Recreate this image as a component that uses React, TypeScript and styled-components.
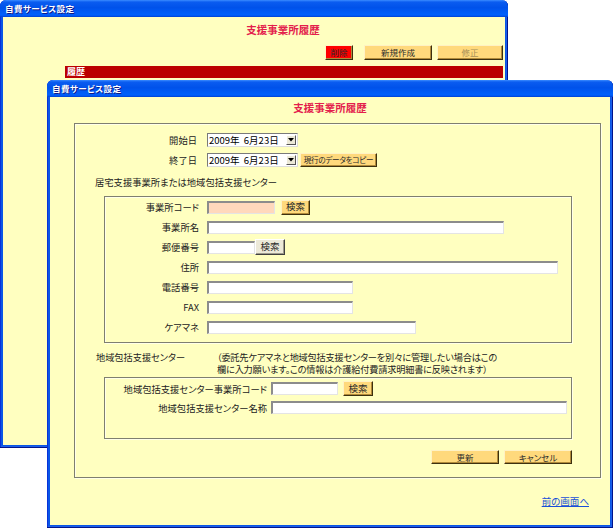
import React from 'react'
import styled, { createGlobalStyle } from 'styled-components'

const GlobalStyle = createGlobalStyle`
    html, body {
        margin: 0;
        padding: 0;
        background: #ffffff;
    }
    body {
        font-family: "Noto Sans CJK JP", "Noto Sans", sans-serif;
        font-feature-settings: "palt";
    }
`

const Desktop = styled.div`
    position: relative;
    width: 615px;
    height: 530px;
    overflow: hidden;
    background: #ffffff;
`

const Window = styled.div<{ $left: number; $top: number; $width: number; $height: number }>`
    position: absolute;
    left: ${({ $left }) => $left}px;
    top: ${({ $top }) => $top}px;
    width: ${({ $width }) => $width}px;
    height: ${({ $height }) => $height}px;
    box-sizing: border-box;
    display: flex;
    flex-direction: column;
    background: #0a56e6;
    border-radius: 6px 6px 0 0;
    box-shadow: inset -1px -1px #00138c, inset 1px 0 #0831d9, inset -2px -2px #1b5fe8;
    overflow: hidden;
`

const TitleBar = styled.div`
    flex: none;
    height: 17px;
    display: flex;
    align-items: center;
    padding-left: 5px;
    background: linear-gradient(
        to bottom,
        #3b8cff 0%,
        #0a5cf0 12%,
        #0052ea 45%,
        #0060fb 85%,
        #0058f2 92%,
        #003fd2 100%
    );
    border-radius: 6px 6px 0 0;
`

const TitleText = styled.span`
    color: #ffffff;
    font-size: 8.5px;
    font-weight: bold;
    letter-spacing: 0.4px;
    text-shadow: 1px 1px #0f1a89;
    line-height: 1;
`

const Client = styled.div`
    flex: 1;
    margin: 0 3px 3px 3px;
    background: #ffffc0;
    overflow: hidden;
    display: flex;
    flex-direction: column;
`

const PageTitle = styled.div<{ $top: number }>`
    margin-top: ${({ $top }) => $top}px;
    height: 16px;
    line-height: 16px;
    text-align: center;
    color: #e3204c;
    font-size: 10.5px;
    font-weight: bold;
    width: 560px;
`

const BackBody = styled.div`
    margin-left: 62px;
    width: 438px;
`

const ButtonRow = styled.div<{ $top?: number; $right?: number }>`
    display: flex;
    justify-content: flex-end;
    align-items: center;
    gap: 5px;
    margin-top: ${({ $top = 0 }) => $top}px;
    padding-right: ${({ $right = 0 }) => $right}px;
`

const Button = styled.button<{
    $w: number
    $h?: number
    $tone?: 'yellow' | 'red' | 'gray'
    $disabled?: boolean
    $size?: number
    $spacing?: number
}>`
    flex: none;
    display: flex;
    align-items: center;
    justify-content: center;
    width: ${({ $w }) => $w}px;
    height: ${({ $h = 15 }) => $h}px;
    padding: 0;
    margin: 0;
    box-sizing: border-box;
    font-family: inherit;
    font-feature-settings: "palt";
    font-size: ${({ $size = 8.5 }) => $size}px;
    letter-spacing: ${({ $spacing = 0 }) => $spacing}px;
    line-height: 1;
    white-space: nowrap;
    overflow: hidden;
    cursor: pointer;
    color: ${({ $disabled }) => ($disabled ? '#a89058' : '#2a2a2a')};
    background: ${({ $tone = 'yellow' }) =>
        $tone === 'red' ? '#ff0000' : $tone === 'gray' ? '#ece9d8' : '#ffd97c'};
    border: 1px solid;
    border-color: ${({ $tone = 'yellow' }) =>
        $tone === 'gray' ? '#ffffff #404040 #404040 #ffffff' : '#fff2c4 #3c3010 #3c3010 #fff2c4'};
    box-shadow: ${({ $tone = 'yellow' }) =>
        $tone === 'gray' ? 'inset -1px -1px #9d9a8c' : 'inset -1px -1px #b08a3a'};
`

const RedBar = styled.div`
    margin-top: 6px;
    height: 12px;
    line-height: 12px;
    background: #bb0000;
    color: #ffffff;
    font-size: 9px;
    font-weight: bold;
    padding-left: 2px;
`

const Fieldset = styled.div`
    margin: 7px 9px 0 24px;
    box-sizing: border-box;
    border: 1px solid #7f7f70;
    box-shadow: 1px 1px 0 #ffffe8, inset 1px 1px 0 #ffffe8;
    padding: 6px 0 13px 0;
`

const FieldRow = styled.div<{ $h?: number }>`
    display: flex;
    align-items: center;
    height: ${({ $h = 20 }) => $h}px;
`

const Label = styled.div<{ $w: number; $gap: number }>`
    flex: none;
    width: ${({ $w }) => $w}px;
    margin-right: ${({ $gap }) => $gap}px;
    text-align: right;
    font-size: 9.3px;
    color: #222222;
    white-space: nowrap;
`

const Input = styled.div<{ $w: number; $peach?: boolean }>`
    flex: none;
    width: ${({ $w }) => $w}px;
    height: 13px;
    box-sizing: border-box;
    background: ${({ $peach }) => ($peach ? '#ffd8bc' : '#ffffff')};
    border-top: 2px solid #8c8c8c;
    border-left: 2px solid #8c8c8c;
    border-right: 1px solid #e4e4e4;
    border-bottom: 1px solid #e4e4e4;
`

const Select = styled.div`
    flex: none;
    width: 91px;
    height: 14px;
    box-sizing: border-box;
    background: #ffffff;
    border-top: 1px solid #7a7a7a;
    border-left: 1px solid #7a7a7a;
    border-right: 1px solid #dcdcdc;
    border-bottom: 1px solid #dcdcdc;
    display: flex;
    align-items: center;
    justify-content: space-between;
    font-size: 9.5px;
    color: #000000;
    padding-left: 1px;
    white-space: pre;
`

const DropArrow = styled.span`
    flex: none;
    width: 10px;
    height: 10px;
    margin-right: 1px;
    box-sizing: border-box;
    background: #ece9d8;
    border: 1px solid;
    border-color: #ffffff #555555 #555555 #ffffff;
    display: flex;
    align-items: center;
    justify-content: center;
`

const SectionText = styled.div<{ $left: number; $top: number }>`
    margin: ${({ $top }) => $top}px 0 0 ${({ $left }) => $left}px;
    height: 20px;
    line-height: 20px;
    font-size: 9.3px;
    color: #222222;
`

const InnerBox = styled.div<{ $top: number; $pt: number; $pb: number }>`
    margin: ${({ $top }) => $top}px 0 0 29px;
    width: 468px;
    box-sizing: border-box;
    border: 1px solid #7f7f70;
    box-shadow: 1px 1px 0 #ffffe8, inset 1px 1px 0 #ffffe8;
    padding: ${({ $pt }) => $pt}px 0 ${({ $pb }) => $pb}px 0;
`

const NoteRow = styled.div`
    display: flex;
    margin: 8px 0 0 21px;
    font-size: 9.2px;
    color: #222222;
    line-height: 12px;
`

const NoteHeading = styled.div`
    flex: none;
    width: 121px;
`

const Note = styled.div`
    white-space: nowrap;
    letter-spacing: -0.2px;
`

const LinkRow = styled.div`
    display: flex;
    justify-content: flex-end;
    padding-right: 21px;
    margin-top: 17px;
`

const BackLink = styled.a`
    font-size: 9.5px;
    line-height: 12px;
    color: #1a4fd8;
    text-decoration: underline;
    cursor: pointer;
`

function DateSelect({ value }: { value: string }) {
    return (
        <Select>
            {value}
            <DropArrow>
                <svg width="6" height="4" viewBox="0 0 6 4">
                    <path d="M0 0H6L3 3.5Z" fill="#000" />
                </svg>
            </DropArrow>
        </Select>
    )
}

export default function App() {
    return (
        <Desktop>
            <GlobalStyle />

            <Window $left={0} $top={0} $width={508} $height={448}>
                <TitleBar>
                    <TitleText>自費サービス設定</TitleText>
                </TitleBar>
                <Client>
                    <PageTitle $top={5}>支援事業所履歴</PageTitle>
                    <BackBody>
                        <ButtonRow $top={7}>
                            <Button $w={28} $tone="red" style={{ marginRight: 6 }}>
                                削除
                            </Button>
                            <Button $w={68}>新規作成</Button>
                            <Button $w={66} $disabled>
                                修正
                            </Button>
                        </ButtonRow>
                        <RedBar>履歴</RedBar>
                    </BackBody>
                </Client>
            </Window>

            <Window $left={47} $top={80} $width={566} $height={448}>
                <TitleBar>
                    <TitleText>自費サービス設定</TitleText>
                </TitleBar>
                <Client>
                    <PageTitle $top={3}>支援事業所履歴</PageTitle>

                    <Fieldset>
                        <FieldRow>
                            <Label $w={122} $gap={10}>開始日</Label>
                            <DateSelect value="2009年  6月23日" />
                        </FieldRow>
                        <FieldRow>
                            <Label $w={122} $gap={10}>終了日</Label>
                            <DateSelect value="2009年  6月23日" />
                            <Button $w={77} $h={14} $size={7.6} $spacing={-0.3} style={{ marginLeft: 2 }}>
                                現行のデータをコピー
                            </Button>
                        </FieldRow>

                        <SectionText $left={20} $top={2}>
                            居宅支援事業所または地域包括支援センター
                        </SectionText>

                        <InnerBox $top={4} $pt={0} $pb={5}>
                            <FieldRow>
                                <Label $w={94} $gap={8}>事業所コード</Label>
                                <Input $w={68} $peach />
                                <Button $w={29} $size={9.5} style={{ marginLeft: 6 }}>
                                    検索
                                </Button>
                            </FieldRow>
                            <FieldRow>
                                <Label $w={94} $gap={8}>事業所名</Label>
                                <Input $w={297} />
                            </FieldRow>
                            <FieldRow>
                                <Label $w={94} $gap={8}>郵便番号</Label>
                                <Input $w={48} />
                                <Button $w={30} $h={16} $tone="gray" $size={9.5}>
                                    検索
                                </Button>
                            </FieldRow>
                            <FieldRow>
                                <Label $w={94} $gap={8}>住所</Label>
                                <Input $w={351} />
                            </FieldRow>
                            <FieldRow>
                                <Label $w={94} $gap={8}>電話番号</Label>
                                <Input $w={146} />
                            </FieldRow>
                            <FieldRow>
                                <Label $w={94} $gap={8}>FAX</Label>
                                <Input $w={146} />
                            </FieldRow>
                            <FieldRow>
                                <Label $w={94} $gap={8}>ケアマネ</Label>
                                <Input $w={209} />
                            </FieldRow>
                        </InnerBox>

                        <NoteRow>
                            <NoteHeading>地域包括支援センター</NoteHeading>
                            <Note>
                                （委託先ケアマネと地域包括支援センターを別々に管理したい場合はこの
                                <br />
                                欄に入力願います。この情報は介護給付費請求明細書に反映されます）
                            </Note>
                        </NoteRow>

                        <InnerBox $top={2} $pt={1} $pb={21}>
                            <FieldRow $h={19}>
                                <Label $w={162} $gap={4}>地域包括支援センター事業所コード</Label>
                                <Input $w={67} />
                                <Button $w={30} $size={9.5} style={{ marginLeft: 5 }}>
                                    検索
                                </Button>
                            </FieldRow>
                            <FieldRow $h={19}>
                                <Label $w={162} $gap={4}>地域包括支援センター名称</Label>
                                <Input $w={296} />
                            </FieldRow>
                        </InnerBox>

                        <ButtonRow $top={11} $right={28}>
                            <Button $w={68} $h={14}>更新</Button>
                            <Button $w={68} $h={14}>キャンセル</Button>
                        </ButtonRow>
                    </Fieldset>

                    <LinkRow>
                        <BackLink>前の画面へ</BackLink>
                    </LinkRow>
                </Client>
            </Window>
        </Desktop>
    )
}
